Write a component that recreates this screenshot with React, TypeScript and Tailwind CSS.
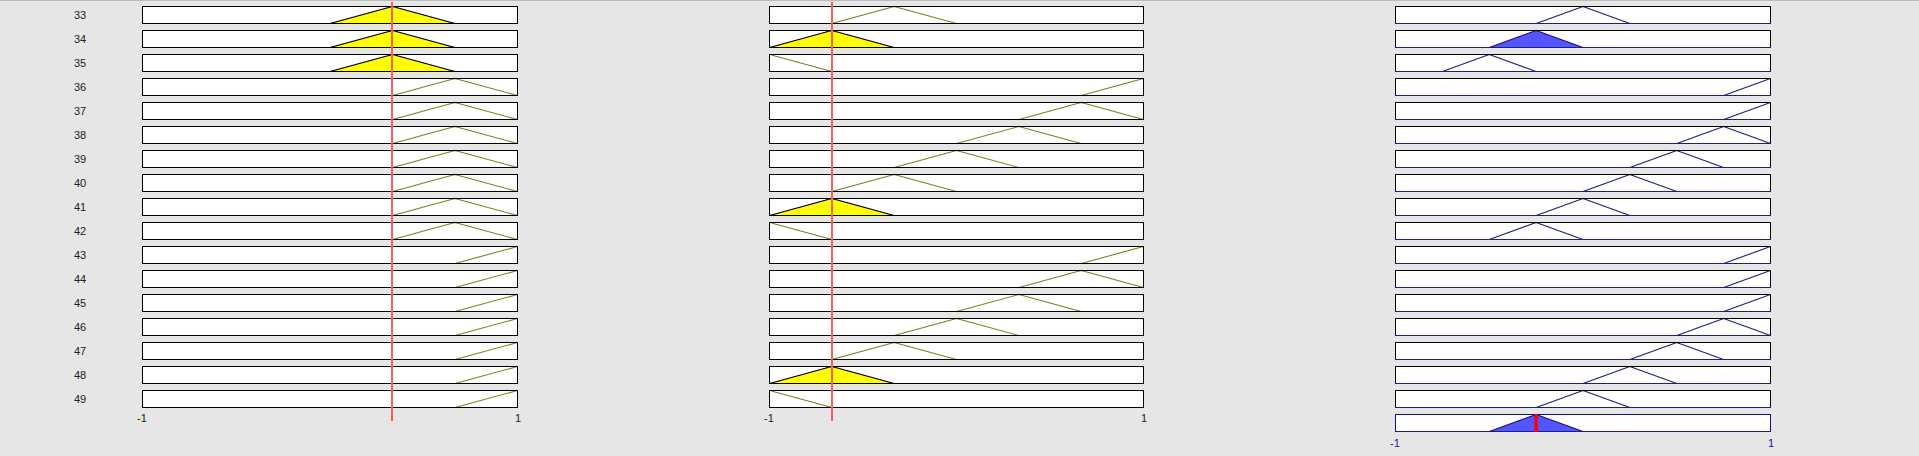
const rows = Array.from({ length: 17 }, (_, i) => 33 + i);

// membership function centres for each rule row
const in1 = [1 / 3, 1 / 3, 1 / 3, 2 / 3, 2 / 3, 2 / 3, 2 / 3, 2 / 3, 2 / 3, 2 / 3, 1, 1, 1, 1, 1, 1, 1];
const in2 = [-1 / 3, -2 / 3, -1, 1, 2 / 3, 1 / 3, 0, -1 / 3, -2 / 3, -1, 1, 2 / 3, 1 / 3, 0, -1 / 3, -2 / 3, -1];
const out = [0, -0.25, -0.5, 1, 1, 0.75, 0.5, 0.25, 0, -0.25, 1, 1, 1, 0.75, 0.5, 0.25, 0];

const fired1 = [0, 1, 2];
const fired2 = [1, 8, 15];
const firedOut = [1];

type BoxProps = {
  w: number;
  c: number;
  half: number;
  fill?: string;
  line: string;
  edge: string;
  border?: string;
  base?: boolean;
  marker?: number;
};

function MfBox({ w, c, half, fill, line, edge, border = "#000", base, marker }: BoxProps) {
  const X = (v: number) => 0.5 + ((v + 1) / 2) * (w - 1);
  const pts = `${X(c - half)},17.5 ${X(c)},0.5 ${X(c + half)},17.5`;
  return (
    <svg width={w} height={18} className="block shrink-0">
      <rect x={0} y={0} width={w} height={18} fill="#fff" />
      {fill ? (
        <polygon points={pts} fill={fill} stroke={edge} strokeWidth={1.2} />
      ) : (
        <polyline points={pts} fill="none" stroke={line} strokeWidth={1.1} />
      )}
      <rect x={0.5} y={0.5} width={w - 1} height={17} fill="none" stroke={border} />
      {base && <line x1={0} y1={17.5} x2={w} y2={17.5} stroke={line} />}
      {marker !== undefined && (
        <line x1={X(marker)} y1={0} x2={X(marker)} y2={18} stroke="#ff0000" strokeWidth={3.5} />
      )}
    </svg>
  );
}

function Ticks({ color }: { color: string }) {
  return (
    <div className={`flex justify-between -mx-[10px] h-[14px] leading-[14px] text-[11px] ${color}`}>
      <span className="w-[20px] text-center">-1</span>
      <span className="w-[20px] text-center">1</span>
    </div>
  );
}

export default function App() {
  return (
    <div className="w-[1919px] h-[456px] bg-[#e6e6e6] border-t border-[#bcbcbc] flex items-start pt-[5px] font-['Liberation_Sans',Arial,sans-serif] overflow-hidden">
      {/* rule numbers */}
      <div className="w-[142px] shrink-0 flex flex-col gap-[6px]">
        {rows.map((r) => (
          <div key={r} className="ml-[70px] w-[20px] h-[18px] leading-[19px] text-center text-[11px] text-[#222]">
            {r}
          </div>
        ))}
      </div>

      {/* input 1 */}
      <div className="relative w-[376px] shrink-0">
        <div className="flex flex-col gap-[6px]">
          {rows.map((r, i) => (
            <MfBox
              key={r}
              w={376}
              c={in1[i]}
              half={1 / 3}
              fill={fired1.includes(i) ? "#ffff00" : undefined}
              line="#808028"
              edge="#000"
            />
          ))}
        </div>
        <div className="mt-[3px]">
          <Ticks color="text-[#222]" />
        </div>
        <div className="absolute top-[-4px] left-[249px] w-[2px] h-[419px] bg-[#ff5c5c]" />
      </div>

      {/* input 2 */}
      <div className="relative w-[375px] shrink-0 ml-[251px]">
        <div className="flex flex-col gap-[6px]">
          {rows.map((r, i) => (
            <MfBox
              key={r}
              w={375}
              c={in2[i]}
              half={1 / 3}
              fill={fired2.includes(i) ? "#ffff00" : undefined}
              line="#808028"
              edge="#000"
            />
          ))}
        </div>
        <div className="mt-[3px]">
          <Ticks color="text-[#222]" />
        </div>
        <div className="absolute top-[-4px] left-[62px] w-[2px] h-[419px] bg-[#ff5c5c]" />
      </div>

      {/* output */}
      <div className="w-[376px] shrink-0 ml-[251px]">
        <div className="flex flex-col gap-[6px]">
          {rows.map((r, i) => (
            <MfBox
              key={r}
              w={376}
              c={out[i]}
              half={0.25}
              fill={firedOut.includes(i) ? "#5555ff" : undefined}
              line="#20207a"
              edge="#1a1a70"
              base
            />
          ))}
          <MfBox w={376} c={-0.25} half={0.25} fill="#5555ff" line="#20207a" edge="#1a1a70" border="#10108a" base marker={-0.25} />
        </div>
        <div className="mt-[4px]">
          <Ticks color="text-[#1010b0]" />
        </div>
      </div>
    </div>
  );
}
